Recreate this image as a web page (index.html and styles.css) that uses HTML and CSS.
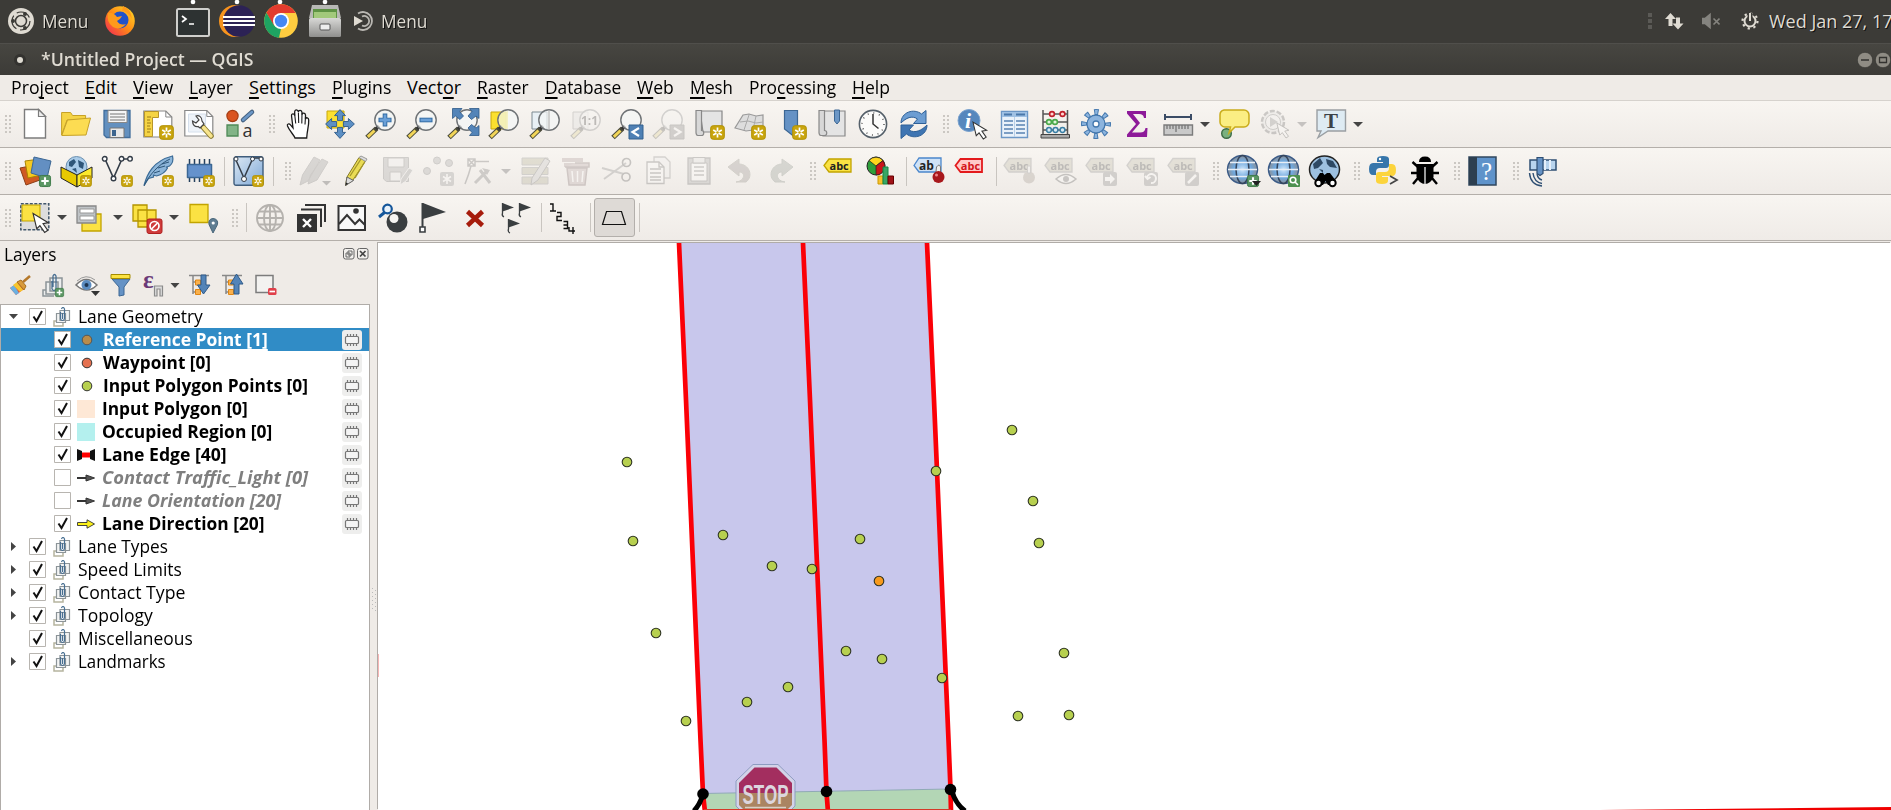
FILE: index.html
```html
<!DOCTYPE html>
<html lang="en">
<head>
<meta charset="utf-8">
<title>*Untitled Project — QGIS</title>
<link rel="stylesheet" href="styles.css">
</head>
<body>
<svg class="defs" width="0" height="0">
<defs>
<linearGradient id="gBlue" x2="1" y2="1"><stop offset="0" stop-color="#dce8f4"/><stop offset="1" stop-color="#7ea8d6"/></linearGradient>
<radialGradient id="gGlobe"><stop offset="0" stop-color="#cfe6fb"/><stop offset=".6" stop-color="#6fa8de"/><stop offset="1" stop-color="#8b9199"/></radialGradient>
<linearGradient id="gFox" x1="1" x2="0" y2="1"><stop offset="0" stop-color="#ffe226"/><stop offset=".5" stop-color="#ff8a16"/><stop offset="1" stop-color="#f0205a"/></linearGradient>
<linearGradient id="gGray" x2="0" y2="1"><stop offset="0" stop-color="#d8d8d6"/><stop offset="1" stop-color="#8f8f8d"/></linearGradient>

<symbol id="badge" viewBox="0 0 15 15"><rect x=".7" y=".7" width="13.6" height="13.6" rx="2.5" fill="#c9a50e" stroke="#b08f00"/><path d="M7.500 2.500v10M3.200 5l8.600 5M3.200 10l8.600-5" stroke="#fff" stroke-width="1.700"/><circle cx="7.500" cy="7.500" r="1.300" fill="#c9a50e"/></symbol>
<symbol id="plus" viewBox="0 0 13 13"><rect x=".5" y=".5" width="12" height="12" rx="2" fill="#5b9663" stroke="#3c7a46"/><path d="M6.500 2.500v8M2.500 6.500h8" stroke="#fff" stroke-width="2.300"/></symbol>
<symbol id="lens" viewBox="0 0 30 30"><path d="M10.500 19.500L1 28.500" stroke="#4a4a3a" stroke-width="5"/><path d="M8.500 21.500L1.800 27.800" stroke="#f2d558" stroke-width="3"/><path d="M13 17l-3 3" stroke="#333" stroke-width="3.500"/><circle cx="19" cy="11" r="10.200" fill="#f4f6f7" fill-opacity=".72" stroke="#6f7376" stroke-width="1.400"/></symbol>
<symbol id="cursor" viewBox="0 0 18 20"><path d="M1 1l3.500 14.500 3-3 4.500 6.500 3-2-4.500-6.300 5-1z" fill="#fff" stroke="#333" stroke-width="1.100"/></symbol>

<symbol id="new" viewBox="0 0 30 30"><path d="M4.500.5h14l7 7v21.500h-21z" fill="#fff" stroke="#7c7c7c" stroke-width="1.400"/><path d="M18.500.5v7h7z" fill="#eee" stroke="#7c7c7c" stroke-width="1.200"/></symbol>
<symbol id="open" viewBox="0 0 30 30"><path d="M.6 26V3.500h9l2 3h13V11H6z" fill="#f5d445" stroke="#c7a227"/><path d="M.8 26.500L6.500 11l23-2-4.500 17z" fill="#fcdc52" stroke="#c7a227"/></symbol>
<symbol id="save" viewBox="0 0 30 30"><path d="M2 1.500h26v27H4.500L2 26z" fill="#6390bf" stroke="#416d9b" stroke-width="1.300"/><path d="M6 1.500h19v12H6z" fill="#f5f5f5" stroke="#888"/><path d="M8 5h15M8 8h15M8 11h15" stroke="#777" stroke-width="1.200"/><path d="M8 19h14v9.500H8z" fill="#e8e8e8" stroke="#777"/><path d="M10 21h4v6h-4z" fill="#3c658f"/></symbol>
<symbol id="layout" viewBox="0 0 30 30"><path d="M.8 2h22l6 6v20h-28z" fill="#fff" stroke="#888" stroke-width="1.200"/><path d="M22.800 2v6h6" fill="none" stroke="#888"/><path d="M1.500 2.500h14v6h-6v19h-8z" fill="#f5d445" stroke="#b8962a"/><path d="M4 8h4M4 11h3M4 14h4M4 17h3M4 20h4M4 23h3" stroke="#9c7d19"/><use href="#badge" x="16" y="16" width="15" height="15"/></symbol>
<symbol id="layoutmgr" viewBox="0 0 30 30"><path d="M.8 1.500h22l6 6v19.500h-28z" fill="#fff" stroke="#888" stroke-width="1.200"/><path d="M4.500 5h17v18h-17z" fill="#eef3f9" stroke="#d6e0ec"/><path d="M22.800 1.500v6h6" fill="none" stroke="#888"/><path d="M18.500 17.500l8.500 9.500" stroke="#8b7c34" stroke-width="5.500" stroke-linecap="round"/><path d="M19.500 18.500l7.500 8.500" stroke="#f7e48c" stroke-width="3.500" stroke-linecap="round"/><path d="M16 19l4-4-2-3c0-4-3-6-6-5l3 4-3 3-3.500-2c0 4 2.500 6 5.500 5.500z" fill="#fff" stroke="#444" stroke-width="1.200"/></symbol>
<symbol id="style" viewBox="0 0 30 30"><circle cx="7.500" cy="7" r="5.600" fill="#da5420" stroke="#a53c12" stroke-width="1.200"/><path d="M18 11l9-8" stroke="#44607f" stroke-width="4.500" stroke-linecap="round"/><path d="M18 11l9-8" stroke="#6c97c6" stroke-width="2.500" stroke-linecap="round"/><path d="M2 16h11v11h-11z" fill="#82b487" stroke="#4f8a58" stroke-width="1.300"/><text x="17.500" y="27.500" class="g18">a</text></symbol>
<symbol id="hand" viewBox="0 0 30 30"><path d="M11 29c-1-3-5.500-7-7.500-12-.7-2 1.500-3 3-1.200l2.500 3-1.500-12c-.2-2.500 2.700-2.700 3.200-.3V3c0-2.800 3.300-2.800 3.700 0 .3-2.500 3.400-2.200 3.600.5v2c.6-2.200 3.300-1.800 3.500.5v4c.6-2 3.200-1.500 3.200 1 .3 6-1.500 9-2 18z" fill="#fff" stroke="#1a1a1a" stroke-width="1.300"/><path d="M10.700 5.500l1 9M14.400 3.500l.3 10.500M18 4.500l-.2 10M21.500 7.500l-.5 8" fill="none" stroke="#1a1a1a" stroke-width="1.100"/></symbol>
<symbol id="panto" viewBox="0 0 30 30"><path d="M2 2h17v17H2z" fill="#fbe02f" stroke="#c9a80c"/><g fill="#5c8fc4" stroke="#2e5a89" stroke-width=".9"><path d="M15 .6l5.500 6h-3v5h-5v-5h-3z"/><path d="M15 29.400l5.500-6h-3v-5h-5v5h-3z"/><path d="M.6 15l6-5.500v3h5v5h-5v3z"/><path d="M29.400 15l-6-5.500v3h-5v5h5v3z"/></g></symbol>
<symbol id="zin" viewBox="0 0 30 30"><use href="#lens"/><path d="M19 4.500v13M12.500 11h13" stroke="#2f68a0" stroke-width="4.600"/><path d="M19 5.500v11M13.500 11h11" stroke="#6aa0d8" stroke-width="2.800"/></symbol>
<symbol id="zout" viewBox="0 0 30 30"><use href="#lens"/><path d="M12.500 11h13" stroke="#2f68a0" stroke-width="4.600"/><path d="M13.500 11h11" stroke="#6aa0d8" stroke-width="2.800"/></symbol>
<symbol id="zfull" viewBox="0 0 30 30"><use href="#lens"/><g fill="#5384b8" stroke="#2e5a89" stroke-width=".8"><path d="M4.500-.5H14l-2.500 3 4 4.500-3.500 3.500L7.500 7l-3 2.500z"/><path d="M31-.5h-9.500l2.500 3-4 4.500 3.500 3.500L28 7l3 2.500z"/><path d="M31 26.500h-9.500l2.500-3-4-4.500 3.500-3.500L28 19l3-2.500z"/></g></symbol>
<symbol id="zsel" viewBox="0 0 30 30"><path d="M2 3h15v17H2z" fill="#fbe02f" stroke="#c9a80c"/><use href="#lens"/><path d="M19 2a9 9 0 0 0 0 18z" fill="#f3efb0" opacity=".7"/></symbol>
<symbol id="zlayer" viewBox="0 0 30 30"><path d="M2 3h15v17H2z" fill="#e8f0f5" stroke="#7d8a92"/><use href="#lens"/><path d="M19 2v18" stroke="#aaa"/></symbol>
<symbol id="znat" viewBox="0 0 30 30"><path d="M2 3h15v17H2z" fill="#ddd" stroke="#777"/><use href="#lens"/><text x="10" y="16" class="g12b" fill="#222">1:1</text></symbol>
<symbol id="zlast" viewBox="0 0 30 30"><use href="#lens"/><path d="M17 16h14v14H17z" fill="#4e80b4" stroke="#33608f"/><path d="M27 19l-6.500 4 6.500 4" fill="none" stroke="#fff" stroke-width="2.200"/></symbol>
<symbol id="znext" viewBox="0 0 30 30"><use href="#lens"/><path d="M17 16h14v14H17z" fill="#777" stroke="#555"/><path d="M21 19l6.500 4-6.500 4" fill="none" stroke="#fff" stroke-width="2.200"/></symbol>
<symbol id="newmap" viewBox="0 0 30 30"><path d="M6 2h22v21H9z" fill="#e4e4e4" stroke="#888" stroke-width="1.200"/><path d="M2 1.500h5.500v20c3 0 3 5 0 5H4c-2 0-2-3-2-3z" fill="#d8d8d8" stroke="#888" stroke-width="1.200"/><use href="#badge" x="16" y="16" width="15" height="15"/></symbol>
<symbol id="new3d" viewBox="0 0 30 30"><path d="M8 6l6-1 7 2 7-1v16l-10-1-7 1-11-3z" fill="#ddd" stroke="#999" stroke-width="1.200"/><path d="M5 13l8-1 8 2 7-1M14 6l-5 15M21 7l-3 14" fill="none" stroke="#aaa"/><use href="#badge" x="16" y="16" width="15" height="15"/></symbol>
<symbol id="newbm" viewBox="0 0 30 30"><path d="M8.500 1.500h13v18l-4 7.500-9-7z" fill="#6592c5" stroke="#3c6794" stroke-width="1.200"/><use href="#badge" x="16" y="16" width="15" height="15"/></symbol>
<symbol id="bm" viewBox="0 0 30 30"><path d="M6 2h22v25H6z" fill="#e4e4e4" stroke="#888" stroke-width="1.200"/><path d="M2 1.500h5.500v20c3 0 3 5 0 5H4c-2 0-2-3-2-3z" fill="#d8d8d8" stroke="#888" stroke-width="1.200"/><path d="M17.500 1h5v11l-2.500 3-2.500-3z" fill="#6c97c6" stroke="#3c6794"/></symbol>
<symbol id="clock" viewBox="0 0 30 30"><circle cx="15" cy="15" r="13.600" fill="#fbfbfa" stroke="#55606a" stroke-width="1.600"/><circle cx="15" cy="15" r="11" fill="none" stroke="#555" stroke-width="1.500" stroke-dasharray="1 4.760"/><path d="M15 5v10l5.500 4.500" fill="none" stroke="#333" stroke-width="1.500"/></symbol>
<symbol id="refresh" viewBox="0 0 30 30"><path d="M2 14C2 3 15-1 22.500 5L27 1.500v13H14.500l4-4.500C13 6 7 9 2 14z" fill="#6c9dd2" stroke="#2e6097"/><path d="M28 16c0 11-13 15-20.500 9L2 29.500V16h12.500l-4.500 5C16 25 23 21 28 16z" fill="#3f75b2" stroke="#2e6097"/></symbol>
<symbol id="info" viewBox="0 0 30 30"><circle cx="11" cy="11.500" r="11" fill="#5687bd" stroke="#7da4cf"/><text x="7" y="19" class="ital" fill="#fff">i</text><use href="#cursor" x="14" y="12" width="17" height="19"/></symbol>
<symbol id="table" viewBox="0 0 30 30"><path d="M2.500 2.500h26v26h-26z" fill="#eaf2fa" stroke="#6c97c6" stroke-width="1.400"/><path d="M3 3h25v5H3z" fill="#9fc1e4"/><path d="M5 5.500h8M17 5.500h9" stroke="#4a78aa" stroke-width="2"/><path d="M5 12h9M17 12h9M5 16h9M17 16h9M5 20h9M17 20h9M5 24h9M17 24h9" stroke="#5883b3" stroke-width="1.300"/><path d="M15.500 8v20" stroke="#b9d0e8"/></symbol>
<symbol id="abacus" viewBox="0 0 30 30"><path d="M3 1v26M27.500 1v26M3 5h24M3 13h24M3 21h24" stroke="#555" stroke-width="1.500"/><path d="M1 25.500h28.500v3.500H1z" fill="#aaa" stroke="#444"/><g fill="#ffd6d2" stroke="#c0202a" stroke-width="1.600"><circle cx="12" cy="5" r="2.400"/><circle cx="22.500" cy="5" r="2.400"/></g><g fill="#dff5da" stroke="#4aa84a" stroke-width="1.600"><circle cx="9" cy="13" r="2.400"/><circle cx="15" cy="13" r="2.400"/></g><g fill="#d7eaf5" stroke="#3b7fa5" stroke-width="1.500"><circle cx="9" cy="21" r="2.400"/><circle cx="15.500" cy="21" r="2.400"/><circle cx="22.500" cy="21" r="2.400"/></g></symbol>
<symbol id="gear" viewBox="0 0 30 30"><circle cx="15" cy="15" r="12" fill="none" stroke="#4478ae" stroke-width="6" stroke-dasharray="4.400 5.025" stroke-dashoffset="2.200"/><circle cx="15" cy="15" r="12" fill="none" stroke="#8cb4de" stroke-width="4" stroke-dasharray="2.500 6.925" stroke-dashoffset="1.250"/><circle cx="15" cy="15" r="9" fill="#8cb4de" stroke="#4478ae" stroke-width="1.300"/><circle cx="15" cy="15" r="3" fill="#fff" stroke="#4478ae" stroke-width="1.300"/></symbol>
<symbol id="sigma" viewBox="0 0 30 30"><path d="M5 2h19v7h-2c-.5-3-2-4-5-4h-6l7 9-8 9.500h8c3.500 0 5-1.500 5.500-4.500h2L25 28H5v-2.500L14 15 5 4.500z" fill="#8d1a99"/></symbol>
<symbol id="measure" viewBox="0 0 30 30"><path d="M2 8h26M2 5v6M28 5v6" stroke="#3b4c66" stroke-width="2"/><path d="M1 16h28.500v10H1z" fill="#c9c9c9" stroke="#7c7c7c" stroke-width="1.400"/><path d="M4 16v4M7 16v4M10 16v4M13 16v7M16 16v4M19 16v4M22 16v4M25 16v4" stroke="#777" stroke-width="1.300"/></symbol>
<symbol id="tip" viewBox="0 0 30 30"><circle cx="7.500" cy="24.500" r="4.800" fill="#79b07f" stroke="#3d6b45" stroke-width="1.400"/><path d="M5 1h20a5 5 0 0 1 5 5v7a5 5 0 0 1-5 5h-9l-6 6 1.500-6H6a5 5 0 0 1-5-5V6a5 5 0 0 1 4-5z" fill="#fbee83" stroke="#c9ac1b" stroke-width="1.500"/></symbol>
<symbol id="action" viewBox="0 0 30 30"><circle cx="13" cy="13" r="11" fill="#ddd" stroke="#555" stroke-width="2.500" stroke-dasharray="5 1.900"/><circle cx="13" cy="13" r="7.500" fill="#eee" stroke="#666"/><path d="M10 8l8 5-8 5z" fill="#777"/><use href="#cursor" x="16" y="13" width="15" height="17"/></symbol>
<symbol id="textann" viewBox="0 0 30 30"><path d="M1 1h28.500v21H12L2 28.500l3-6.500H1z" fill="#deebf3" stroke="#9a9fa3" stroke-width="1.400"/><text x="8" y="18.500" class="serifT">T</text></symbol>

<symbol id="dsm" viewBox="0 0 30 30"><path d="M0 12l15-3 5 15-14 5z" fill="#cf5a24" stroke="#8d3d16"/><path d="M5 5l15-2 2 16-14 3z" fill="#f5c921" stroke="#a98400"/><path d="M14 1l17 4-4 17-16-5z" fill="#638fc2" stroke="#3c6794"/><use href="#plus" x="19" y="19" width="12" height="12"/></symbol>
<symbol id="geopkg" viewBox="0 0 30 30"><circle cx="15.500" cy="11" r="10.500" fill="#a9cbe8" stroke="#6b90b0"/><path d="M8 6l5-3 2 3-4 5-3-1zM17 4l6 3-1 6-4-2zM11 13l4-1 1 5z" fill="#2f5678"/><path d="M0 11l16 8v12L0 22z" fill="#e8c900" stroke="#222"/><path d="M16 19l15-8v11l-15 9z" fill="#fbe82b" stroke="#222"/><use href="#badge" x="19" y="19" width="12" height="12"/></symbol>
<symbol id="shp" viewBox="0 0 30 30"><path d="M3 3l8.500 19L20 3h7" fill="none" stroke="#333c47" stroke-width="1.600"/><g fill="#fff" stroke="#333c47" stroke-width="1.400"><circle cx="2.700" cy="2.800" r="2.300"/><circle cx="11.500" cy="22.500" r="2.300"/><circle cx="19.500" cy="2.800" r="2.300"/><circle cx="28" cy="2.800" r="2.300"/></g><use href="#badge" x="19" y="19" width="12" height="12"/></symbol>
<symbol id="feather" viewBox="0 0 30 30"><path d="M1 29.500C4 18 10 5 29.500 0c1 4-.5 8-3 10l-3 1 1 1c-2 4-7 7-11 8l-3-1 0 2-5 1.500z" fill="#8db6da" stroke="#3c6c97" stroke-width="1.200"/><path d="M1 30C6 19 16 8 27 3M11 17l6-2M15 12l7-2M19 8l7-2" fill="none" stroke="#2d5679"/><use href="#badge" x="19" y="19" width="12" height="12"/></symbol>
<symbol id="chip" viewBox="0 0 30 30"><path d="M5.500 3v23M10.500 3v23M15.500 3v23M20.500 3v23M25.500 3v23" stroke="#26415e" stroke-width="1.500"/><path d="M3.500 8.500h24v13h-24z" fill="#6592cc" stroke="#3c6794" stroke-width="1.500" stroke-linejoin="round"/><use href="#badge" x="19" y="19" width="12" height="12"/></symbol>
<symbol id="virt" viewBox="0 0 30 30"><rect x="1" y=".8" width="29" height="28.500" rx="2" fill="url(#gBlue)" stroke="#3f5d7c" stroke-width="1.400"/><path d="M2 2l9 20L20 2h9" fill="none" stroke="#333c47" stroke-width="1.500"/><g fill="#fff" stroke="#333c47"><circle cx="3" cy="3" r="2"/><circle cx="11" cy="23" r="2.500"/><circle cx="19.500" cy="3" r="2"/><circle cx="28" cy="3" r="2"/></g><use href="#badge" x="19" y="19" width="12" height="12"/></symbol>
<symbol id="edits" viewBox="0 0 30 30"><path d="M0 29l2.500-10L14 1l6 3L8 25zM8 28l2.500-9L22 3l6 3-11 18z" fill="#888" stroke="#666"/><path d="M22 25h9l-4.500 4.500z" fill="#333"/></symbol>
<symbol id="pencil" viewBox="0 0 30 30"><path d="M4.500 29.500L6 21 18 1.500l6.500 3.500L12 24z" fill="#eadc55" stroke="#857822"/><path d="M14 22L24 5.500M9 20L20 3" stroke="#a5972b" stroke-width="1.300"/><path d="M18 1.500L20 0l6 3-1.500 2.500z" fill="#ddd" stroke="#999"/><path d="M4.500 29.500L6 21l6.500 3.500z" fill="#ddd" stroke="#666"/><path d="M4.500 29.500l.6-3 2 1z" fill="#222"/></symbol>
<symbol id="savee" viewBox="0 0 30 30"><path d="M1.500 1.500h25v24h-22l-3-2.500z" fill="#999" stroke="#666"/><path d="M6 2h16v9H6zM8 16h11v9H8z" fill="#eee" stroke="#666"/><path d="M18 29l1-6 8-11 4 2-7 11z" fill="#888" stroke="#eee"/></symbol>
<symbol id="addpt" viewBox="0 0 30 30"><g fill="#999" stroke="#666"><circle cx="14" cy="4.500" r="3.500"/><circle cx="26" cy="7" r="3.500"/><circle cx="4" cy="15" r="3.500"/></g><rect x="17" y="16" width="14" height="14" rx="2" fill="#888"/><path d="M24 18v10M20 20.500l8 5M20 25.500l8-5" stroke="#fff" stroke-width="1.600"/></symbol>
<symbol id="vertex" viewBox="0 0 30 30"><path d="M4 3h7v7H4zM4 3l7 7M11 3l-7 7M11 5.500h14M7 10Q5 18 1 28" fill="none" stroke="#555" stroke-width="1.500"/><path d="M11 27l13-13M16 14l10 13" stroke="#666" stroke-width="3"/><path d="M18 12l8 2-3 5z" fill="#666"/></symbol>
<symbol id="modattr" viewBox="0 0 30 30"><path d="M2 2h26v7H2zM2 11.500h26v7H2zM2 21h26v7H2z" fill="#a9a46f" stroke="#777"/><path d="M11 29l1-7L25 2l5 3-12 19z" fill="#bbb" stroke="#555"/></symbol>
<symbol id="trash" viewBox="0 0 30 30"><path d="M1 2h21v4H1zM3 7h18v4H3z" fill="#a88"/><path d="M6 12h20l-2 17H8zM4 11h24V7H14" fill="#b99" stroke="#755" stroke-width="1.500"/><path d="M11 15l1 11M16.500 15v11M22 15l-1 11" stroke="#fff" stroke-width="1.500"/></symbol>
<symbol id="cut" viewBox="0 0 30 30"><path d="M0 12l22 6M2 23L24 7" stroke="#777" stroke-width="2"/><circle cx="24.500" cy="6.500" r="4" fill="none" stroke="#444" stroke-width="1.700"/><circle cx="24" cy="21" r="4" fill="none" stroke="#444" stroke-width="1.700"/></symbol>
<symbol id="copy" viewBox="0 0 30 30"><path d="M11 1h11l5 5v16H11z" fill="#eee" stroke="#777" stroke-width="1.300"/><path d="M4 6h12l5 5v16.500H4z" fill="#fff" stroke="#555" stroke-width="1.300"/><path d="M7 13h11M7 17h11M7 21h11M7 24h11M16 6v5h5" fill="none" stroke="#555" stroke-width="1.300"/></symbol>
<symbol id="paste" viewBox="0 0 30 30"><path d="M4 2h22v26H4z" fill="#999" stroke="#555" stroke-width="1.300"/><path d="M7 7h16v18H7z" fill="#fff" stroke="#555"/><path d="M9 1.500h12V7H9z" fill="#ddd" stroke="#555"/><path d="M10 11h10M10 15h10M10 19h10" stroke="#666" stroke-width="1.300"/></symbol>
<symbol id="undo" viewBox="0 0 30 30"><path d="M3 11L14 3v5c10 0 15 12 7 18H11c9-1 10-10 3-10v4z" fill="#8a7c78" stroke="#776"/></symbol>
<symbol id="redo" viewBox="0 0 30 30"><path d="M27 11L16 3v5C6 8 1 20 9 26h10c-9-1-10-10-3-10v4z" fill="#7c8a7c" stroke="#676"/></symbol>
<symbol id="abc" viewBox="0 0 30 30"><path d="M-1 9.500L4 3h22v13H4z" fill="#fae243" stroke="#c2a400" stroke-width="1.300"/><text x="4.500" y="13.500" class="g11b" fill="#222">abc</text></symbol>
<symbol id="diagram" viewBox="0 0 30 30"><circle cx="10" cy="10" r="9" fill="#2f9e3a" stroke="#222"/><path d="M10 10L3 4.500A9 9 0 0 1 17 4.500z" fill="#ffd51c" stroke="#222" stroke-width=".7"/><path d="M10 10l7-5.500A9 9 0 0 1 10 19z" fill="#c8141b" stroke="#222" stroke-width=".7"/><path d="M12 20h5v8h-5z" fill="#f8c22d" stroke="#c90"/><path d="M17 11h5v17h-5z" fill="#3aa565" stroke="#184"/><path d="M22 20h5.500v8H22z" fill="#a01218" stroke="#600"/></symbol>
<symbol id="abpin" viewBox="0 0 30 30"><path d="M-1 9.500L4 2h22v14H4z" fill="#cfe2f7" stroke="#4b87cc" stroke-width="1.300"/><text x="4" y="13.500" class="g12b" fill="#222">ab</text><path d="M20.500 20l1-9q3-4 4 0v9" fill="#eee" stroke="#777"/><circle cx="23.500" cy="21" r="6" fill="#a8181c"/><circle cx="21.500" cy="19" r="1.500" fill="#e88"/></symbol>
<symbol id="abcred" viewBox="0 0 30 30"><path d="M-.5 9.500L4.500 3H26v13H4.500z" fill="#ffc9c9" stroke="#e31a1c" stroke-width="1.800"/><text x="4.800" y="13.500" class="g11b" fill="#d4151b">abc</text></symbol>
<symbol id="tagg" viewBox="0 0 30 30"><path d="M-1 9.500L4 2.500h22v13.500H4z" fill="#b5ae8a" stroke="#777" stroke-width="1.300"/><text x="4.500" y="13.500" class="g11b" fill="#222">abc</text></symbol>
<symbol id="l1" viewBox="0 0 30 30"><use href="#tagg"/><circle cx="24" cy="21.500" r="6" fill="#987" /><path d="M22.500 17V10h3v7z" fill="#eee" stroke="#777"/></symbol>
<symbol id="l2" viewBox="0 0 30 30"><use href="#tagg"/><path d="M10 23q10-9 20 0-10 9-20 0z" fill="#fff" stroke="#444" stroke-width="1.500"/><circle cx="20" cy="23" r="3" fill="#555"/></symbol>
<symbol id="l3" viewBox="0 0 30 30"><use href="#tagg"/><rect x="16" y="16" width="14" height="14" rx="2" fill="#777"/><path d="M18 21h5v-3l5 5-5 5v-3h-5z" fill="#fff"/></symbol>
<symbol id="l4" viewBox="0 0 30 30"><use href="#tagg"/><rect x="16" y="16" width="14" height="14" rx="2" fill="#777"/><path d="M19 22a4.500 4.500 0 1 1 4 5M17 20l2.500 3 3-2" fill="none" stroke="#fff" stroke-width="2"/></symbol>
<symbol id="l5" viewBox="0 0 30 30"><use href="#tagg"/><rect x="16" y="16" width="14" height="14" rx="2" fill="#777"/><path d="M19 27l8-8" stroke="#fff" stroke-width="2.500"/></symbol>
<symbol id="globe" viewBox="0 0 30 30"><ellipse cx="14.500" cy="13.500" rx="15" ry="14" fill="url(#gGlobe)" stroke="#3c5c88" stroke-width="1.500"/><ellipse cx="14.500" cy="13.500" rx="6.500" ry="14" fill="none" stroke="#35455c" stroke-width="1.500"/><path d="M2 6.500h25M0 13.500h29M2 20.500h25" stroke="#e8eef6" stroke-width="1.500"/></symbol>
<symbol id="gadd" viewBox="0 0 30 30"><use href="#globe"/><use href="#plus" x="19" y="19" width="12" height="12"/><path d="M24 25h9l-4.500 5z" fill="#222"/></symbol>
<symbol id="gsearch" viewBox="0 0 30 30"><use href="#globe"/><rect x="19" y="19" width="12" height="12" rx="1" fill="#4d9150"/><circle cx="24" cy="24" r="2.800" fill="none" stroke="#fff" stroke-width="1.600"/><path d="M26 26l3 3" stroke="#fff" stroke-width="1.600"/></symbol>
<symbol id="gbino" viewBox="0 0 30 30"><ellipse cx="14.500" cy="13.500" rx="15" ry="13.500" fill="#9dc0e0" stroke="#222" stroke-width="1.500"/><path d="M3 8l7-6 3 5-5 5-4 1zM16 3l7 2 4 7-7-1-3-3zM9 13l4 1v3" fill="#2e4964"/><path d="M5 25l5-8h3l1.500 2L17 17h3l6 8-3 4h-5l-2.500-4L13 29H8z" fill="#000"/><circle cx="8.500" cy="27" r="3.200" fill="#fff" stroke="#000" stroke-width="2"/><circle cx="22.500" cy="27" r="3.200" fill="#fff" stroke="#000" stroke-width="2"/></symbol>
<symbol id="python" viewBox="0 0 30 30"><path d="M8 3q0-3 6-3t6 3v6q0 3-3 3h-6q-4 0-4 4v3H4q-4 0-4-6t4-6h10V6H8z" fill="#3776ab"/><path d="M20 8h3q4 0 4 6t-4 6H13v1h6v4q0 3-6 3t-6-3v-6q0-3 3-3h6q4 0 4-4z" fill="#fcd43c"/><circle cx="11" cy="3" r="1.200" fill="#fff"/><path d="M21 20l7 4-7 4" fill="none" stroke="#444" stroke-width="1.700"/></symbol>
<symbol id="bug" viewBox="0 0 30 30"><path d="M9 6q0-5.500 6-5.500T21 6z"/><path d="M6.500 8h17v13q-3 7-8.500 7T6.500 21z"/><path d="M15 11v17" stroke="#eee" stroke-width="1.300"/><path d="M8 11L2.500 6M22 11l5.500-5M7 17H1M23 17h6M8 22l-5 6M22 22l5 6" stroke="#000" stroke-width="2.400" fill="none"/></symbol>
<symbol id="help" viewBox="0 0 30 30"><path d="M0 1h27v28H0z" fill="#5f93ca" stroke="#30475e" stroke-width="1.500"/><path d="M0 1h8v28H0z" fill="#2d3f50"/><text x="12" y="23.500" class="serifQ">?</text></symbol>
<symbol id="sat" viewBox="0 0 30 30"><path d="M2 4h9v10H2zM13 4h15v10H13z" fill="#b8d4ee" stroke="#2f4f73" stroke-width="1.500"/><path d="M17 4v10M22 4v10" stroke="#e5effa" stroke-width="2"/><path d="M9 1.500h6v16l-3 2-3-2z" fill="#6592c5" stroke="#2f4f73" stroke-width="1.200"/><path d="M9 18q1 5 5 6M5 17q1 9 9 10.500M1.500 17q1 12 12.500 13" fill="none" stroke="#2f4f73" stroke-width="1.400"/></symbol>

<symbol id="sel" viewBox="0 0 30 30"><path d="M.8.800h28v26H.8z" fill="#ddd" stroke="#41566b" stroke-width="1.500" stroke-dasharray="3 1.500"/><path d="M2 2h18v16H2z" fill="#fbe243" stroke="#c2a400"/><use href="#cursor" x="12" y="9.500" width="19" height="21"/></symbol>
<symbol id="selform" viewBox="0 0 30 30"><path d="M6 11h19v17H6z" fill="#fbe243" stroke="#c2a400" stroke-width="1.300"/><path d="M1 3h19v17H1z" fill="#bfc3c6" stroke="#888" stroke-width="1.300"/><path d="M4 6h14v4H4zM4 13h14v4H4z" fill="#fff" stroke="#999"/></symbol>
<symbol id="desel" viewBox="0 0 30 30"><path d="M1 2h14v16H1zM6 7h18v17H6z" fill="#fbe243" stroke="#b39400" stroke-width="1.300"/><rect x="15" y="16" width="15" height="14.500" rx="2" fill="#cf3b3b" stroke="#b02020"/><circle cx="22.500" cy="23" r="4.500" fill="none" stroke="#fff" stroke-width="1.700"/><path d="M19.500 26l6-6" stroke="#fff" stroke-width="1.700"/></symbol>
<symbol id="selloc" viewBox="0 0 30 30"><path d="M2 1.500h18v18H2z" fill="#fbe243" stroke="#c2a400" stroke-width="1.300"/><path d="M25 30l-4-8.500q-1-5.500 4-6 5.500.5 4.500 6z" fill="#5f7d92" stroke="#48657a"/><circle cx="25.200" cy="20" r="1.600" fill="#fff"/></symbol>
<symbol id="wire" viewBox="0 0 30 30"><g fill="none" stroke="#b5b2ae" stroke-width="1.900"><circle cx="15" cy="15" r="13"/><ellipse cx="15" cy="15" rx="6" ry="13"/><path d="M2 15h26M4 8.500h22M4 21.500h22M15 2v26"/></g></symbol>
<symbol id="xlay" viewBox="0 0 30 30"><path d="M9 2h20v17M5 6.500h20V24" fill="none" stroke="#333" stroke-width="2"/><path d="M1 11h20v18H1z" fill="#333"/><path d="M7 16l8 8M15 16l-8 8" stroke="#fff" stroke-width="2.400"/></symbol>
<symbol id="pic" viewBox="0 0 30 30"><path d="M1.500 3h26.500v24H1.500z" fill="#f8f8f8" stroke="#333" stroke-width="2"/><circle cx="19" cy="8" r="2.800" fill="#333"/><path d="M2 21l8-9 8 9 4.500-4.500L28 22" fill="none" stroke="#333" stroke-width="2"/></symbol>
<symbol id="ball" viewBox="0 0 30 30"><circle cx="19" cy="19" r="10.500" fill="#3a3e40"/><circle cx="16" cy="15.500" r="4.500" fill="#f6f4f1"/><circle cx="9.500" cy="6" r="4.300" fill="#e8f2fb" stroke="#15569a" stroke-width="2.200"/><path d="M6.500 9.500L1 14" stroke="#15569a" stroke-width="3"/></symbol>
<symbol id="flag" viewBox="0 0 30 30"><path d="M3.500 0v24" stroke="#3a3e40" stroke-width="2"/><path d="M4 0l23 9-23 7z" fill="#3a3e40"/><path d="M1 24h5v5H1z" fill="#fff" stroke="#3a3e40" stroke-width="1.600"/></symbol>
<symbol id="xred" viewBox="0 0 30 30"><path d="M7.500 8.500l15 14M22.500 8.500l-15 14" stroke="#a61c0c" stroke-width="4.500"/></symbol>
<symbol id="flags" viewBox="0 0 30 30"><g id="f3"><path d="M1.500 0v10q-1 3 1.500 4" fill="none" stroke="#3a3e40" stroke-width="1.300"/><path d="M1.500 0l11.500 4.500-11.500 4z" fill="#3a3e40"/></g><use href="#f3" x="17"/><use href="#f3" x="6" y="16"/></symbol>
<symbol id="n1234" viewBox="0 0 30 30"><path d="M0 1h3v7M0 8h6M7 9.500h4v4H7v4h5M13.500 18.500h4v7h-4M13.500 22h4M19 24v4h6M23 24v7" fill="none" stroke="#111" stroke-width="1.400"/></symbol>
<symbol id="trap" viewBox="0 0 30 30"><path d="M7.500 8.500h15l4 13h-23z" fill="none" stroke="#111" stroke-width="1.200"/></symbol>

<symbol id="grp" viewBox="0 0 18 20"><path d="M4 14H1v5h9v-3" fill="none" stroke="#b5b49f" stroke-width="1.500"/><path d="M3.500 6.500h9v9h-9zM7 3.500h9.500v10H7z" fill="#eef0f0" fill-opacity=".7" stroke="#8c9498" stroke-width="1.200"/><path d="M7.500 5v7q2 3 4 0V2Q10-1 8.500 2M9.500 6v6" fill="none" stroke="#486f92" stroke-width="1.200"/></symbol>
<symbol id="mem" viewBox="0 0 20 20"><rect width="20" height="20" rx="3" fill="#eeeeed"/><path d="M5.500 4v12M8.500 4v12M11.500 4v12M14.500 4v12" stroke="#777" stroke-width="1.200"/><rect x="3.500" y="6.500" width="13" height="7" rx="1" fill="#f4f4f4" stroke="#777" stroke-width="1.200"/></symbol>
<symbol id="check" viewBox="0 0 17 17"><path d="M.5.5h16v16H.5z" fill="#fff" stroke="#b8b5b0"/><path d="M4.500 8.500l3 4.500 5.500-10" fill="none" stroke="#111" stroke-width="2"/></symbol>
<symbol id="uncheck" viewBox="0 0 17 17"><path d="M.5.5h16v16H.5z" fill="#fff" stroke="#b8b5b0"/></symbol>
<symbol id="down" viewBox="0 0 9 5"><path d="M0 0h9L4.500 5z" fill="#444"/></symbol>
<symbol id="right" viewBox="0 0 5 9"><path d="M0 0v9l5-4.500z" fill="#444"/></symbol>
<symbol id="arrow" viewBox="0 0 18 8"><path d="M0 4h10" stroke="#333" stroke-width="2"/><path d="M9 1l8.500 3L9 7z" fill="#555" stroke="#333"/></symbol>
<symbol id="yarrow" viewBox="0 0 18 10"><path d="M.5 3.500H10V.8L17.500 5 10 9.200V6.500H.5z" fill="#fbf018" stroke="#333" stroke-width=".9"/></symbol>
<symbol id="edge" viewBox="0 0 18 12"><path d="M0 0l5 2v8l-5 2zM18 0l-5 2v8l5 2z" fill="#111"/><path d="M5 3.500h8v5H5z" fill="#f00"/></symbol>
</defs>
</svg>

<header class="panel">
  <svg class="p-logo" width="26" height="43"><circle cx="13" cy="21" r="13" fill="#dfdbd2"/><circle cx="13" cy="21" r="5.500" fill="none" stroke="#3c3b37" stroke-width="1.500"/><circle cx="13" cy="21" r="9" fill="none" stroke="#3c3b37" stroke-width="1.200" stroke-dasharray="15 3.850"/><g fill="#3c3b37"><circle cx="5" cy="21" r="2"/><circle cx="17" cy="14" r="2"/><circle cx="17" cy="28" r="2"/></g></svg>
  <span class="ptext m8" data-w="46">Menu</span>
  <svg class="m17" width="30" height="43"><circle cx="15" cy="21" r="14.800" fill="url(#gFox)"/><circle cx="15" cy="20" r="8.500" fill="#2152c8"/><path d="M3 13q5-1 9 4l5-1q-2 4-5 5 3 5 9 3-6 7-13 3-7-5-5-14zM18 6q8 3 9 13-5-8-10-8z" fill="#ff9a1b"/></svg>
  <svg class="m41" width="34" height="43"><circle cx="17" cy="2" r="2.300" fill="#fff"/><rect x="1" y="9" width="32" height="27" rx="1.500" fill="#2d3232" stroke="#cfcfcc" stroke-width="2"/><path d="M6 16l4 3-4 3M13 24h5" fill="none" stroke="#fff" stroke-width="1.700"/></svg>
  <svg class="m9" width="36" height="43"><circle cx="18" cy="2" r="2.300" fill="#fff"/><circle cx="16" cy="21" r="16" fill="#f7941e"/><circle cx="20" cy="21" r="15.800" fill="#2c2255"/><path d="M4 17h32M4 21h32M4 25h32" stroke="#fff" stroke-width="2"/></svg>
  <svg class="m9" width="34" height="43"><circle cx="16" cy="2" r="2.300" fill="#fff"/><circle cx="17" cy="21" r="16.800" fill="#ffcd40"/><path d="M2.400 12.700A16.800 16.800 0 0 1 31.600 13H17l-7.500 12.500z" fill="#e33b2e"/><path d="M2.400 12.700l7.500 12.600L17 28.500 15 37.800A16.800 16.800 0 0 1 2.400 12.700z" fill="#1ea362"/><circle cx="17" cy="21" r="8" fill="#fff"/><circle cx="17" cy="21" r="6.200" fill="#4587f3"/></svg>
  <svg class="m11" width="32" height="43"><circle cx="16" cy="2" r="2.300" fill="#fff"/><path d="M3 5h26l3 13H0z" fill="#b8b8b5"/><path d="M4 9h24v9H4z" fill="#5e9344"/><path d="M5 12h22v6H5z" fill="#a2c97b"/><rect y="18" width="32" height="19" rx="1.500" fill="url(#gGray)"/><rect x="11" y="24" width="10" height="6" rx="1" fill="#eee" stroke="#555"/></svg>
  <svg class="m13" width="20" height="43"><g fill="none" stroke="#b9b7b2" stroke-width="1.800"><path d="M4 13.500a9 9 0 1 1 0 15"/><path d="M8 16.500a5 5 0 1 1 0 9"/></g><path d="M0 16l9 5-9 5z" fill="#dfdbd2"/></svg>
  <span class="ptext m7" data-w="46">Menu</span>
  <span class="grow"></span>
  <svg width="6" height="43"><path d="M1 13h4v4H1zM1 19h4v4H1zM1 25h4v4H1z" fill="#5b5a56"/></svg>
  <svg class="m12" width="19" height="43"><path d="M5.500 13l5.500 6H7.500v7h-4v-7H0zM13 29.500l-5.500-6h3.500v-6h4v6h3.500z" fill="#dfdbd2"/></svg>
  <svg class="m18" width="18" height="43"><path d="M0 18.500h3l5-4v13l-5-4H0zM11.500 18.500l6 6M17.500 18.500l-6 6" fill="#85847f" stroke="#85847f" stroke-width="1.600"/></svg>
  <svg class="m21" width="18" height="43"><circle cx="9" cy="21" r="5.500" fill="none" stroke="#dfdbd2" stroke-width="2"/><circle cx="9" cy="21" r="7.500" fill="none" stroke="#dfdbd2" stroke-width="2.200" stroke-dasharray="2.300 3.590"/><path d="M9 13v8" stroke="#3c3b37" stroke-width="5"/><path d="M9 13v8" stroke="#dfdbd2" stroke-width="2"/></svg>
  <span class="ptext m10 clock" data-w="123">Wed Jan 27, 17</span>
</header>

<div class="title">
  <svg width="14" height="32"><circle cx="7" cy="16" r="6" fill="#33322f"/><circle cx="7" cy="16" r="3" fill="#dfdbd2"/></svg>
  <span class="ttext" data-w="212">*Untitled Project — QGIS</span>
  <span class="grow"></span>
  <svg width="34" height="32"><g fill="#8f8c84" stroke="#2c2b28" stroke-width=".6"><circle cx="8" cy="16" r="7.700"/><circle cx="26" cy="16" r="7.700"/></g><path d="M4 16h8M22.500 13.500h7v5h-7z" fill="none" stroke="#33322f" stroke-width="1.300"/></svg>
</div>

<nav class="menu">
  <span data-w="58">Pro<u>j</u>ect</span><span data-w="32"><u>E</u>dit</span><span data-w="40"><u>V</u>iew</span><span data-w="44"><u>L</u>ayer</span><span data-w="67"><u>S</u>ettings</span><span data-w="59"><u>P</u>lugins</span><span data-w="54">Vect<u>o</u>r</span><span data-w="52"><u>R</u>aster</span><span data-w="76"><u>D</u>atabase</span><span data-w="37"><u>W</u>eb</span><span data-w="43"><u>M</u>esh</span><span data-w="87">Pro<u>c</u>essing</span><span data-w="38"><u>H</u>elp</span>
</nav>

<div class="bar">
  <i class="grip first"></i>
  <b><svg><use href="#new"/></svg></b><b><svg><use href="#open"/></svg></b><b><svg><use href="#save"/></svg></b><b><svg><use href="#layout"/></svg></b><b><svg><use href="#layoutmgr"/></svg></b><b><svg><use href="#style"/></svg></b>
  <i class="grip"></i>
  <b><svg><use href="#hand"/></svg></b><b><svg><use href="#panto"/></svg></b><b><svg><use href="#zin"/></svg></b><b><svg><use href="#zout"/></svg></b><b><svg><use href="#zfull"/></svg></b><b><svg><use href="#zsel"/></svg></b><b><svg><use href="#zlayer"/></svg></b><b class="off"><svg><use href="#znat"/></svg></b><b><svg><use href="#zlast"/></svg></b><b class="off"><svg><use href="#znext"/></svg></b><b><svg><use href="#newmap"/></svg></b><b><svg><use href="#new3d"/></svg></b><b><svg><use href="#newbm"/></svg></b><b><svg><use href="#bm"/></svg></b><b><svg><use href="#clock"/></svg></b><b><svg><use href="#refresh"/></svg></b>
  <i class="grip"></i>
  <b><svg><use href="#info"/></svg></b><b><svg><use href="#table"/></svg></b><b><svg><use href="#abacus"/></svg></b><b><svg><use href="#gear"/></svg></b><b><svg><use href="#sigma"/></svg></b><b class="dd"><svg><use href="#measure"/></svg></b><b><svg><use href="#tip"/></svg></b><b class="dd off"><svg><use href="#action"/></svg></b><b class="dd"><svg><use href="#textann"/></svg></b>
</div>

<div class="bar">
  <i class="grip first"></i>
  <b><svg><use href="#dsm"/></svg></b><b><svg><use href="#geopkg"/></svg></b><b><svg><use href="#shp"/></svg></b><b><svg><use href="#feather"/></svg></b><b><svg><use href="#chip"/></svg></b>
  <i class="sep"></i><b><svg><use href="#virt"/></svg></b><i class="sep"></i><i class="grip"></i>
  <b class="off"><svg><use href="#edits"/></svg></b><b><svg><use href="#pencil"/></svg></b><b class="off"><svg><use href="#savee"/></svg></b><b class="off"><svg><use href="#addpt"/></svg></b><b class="dd off"><svg><use href="#vertex"/></svg></b><b class="off"><svg><use href="#modattr"/></svg></b><b class="off"><svg><use href="#trash"/></svg></b><b class="off"><svg><use href="#cut"/></svg></b><b class="off"><svg><use href="#copy"/></svg></b><b class="off"><svg><use href="#paste"/></svg></b><b class="off"><svg><use href="#undo"/></svg></b><b class="off"><svg><use href="#redo"/></svg></b>
  <i class="grip"></i>
  <b><svg><use href="#abc"/></svg></b><b><svg><use href="#diagram"/></svg></b><i class="sep"></i><b><svg><use href="#abpin"/></svg></b><b><svg><use href="#abcred"/></svg></b><i class="sep"></i>
  <b class="off"><svg><use href="#l1"/></svg></b><b class="off"><svg><use href="#l2"/></svg></b><b class="off"><svg><use href="#l3"/></svg></b><b class="off"><svg><use href="#l4"/></svg></b><b class="off"><svg><use href="#l5"/></svg></b>
  <i class="grip"></i>
  <b><svg><use href="#gadd"/></svg></b><b><svg><use href="#gsearch"/></svg></b><b><svg><use href="#gbino"/></svg></b><i class="grip"></i>
  <b><svg><use href="#python"/></svg></b><b><svg><use href="#bug"/></svg></b><i class="grip"></i>
  <b><svg><use href="#help"/></svg></b><i class="grip"></i><b><svg><use href="#sat"/></svg></b>
</div>

<div class="bar last">
  <i class="grip first"></i>
  <b class="dd"><svg><use href="#sel"/></svg></b><b class="dd"><svg><use href="#selform"/></svg></b><b class="dd"><svg><use href="#desel"/></svg></b><b><svg><use href="#selloc"/></svg></b>
  <i class="grip"></i><i class="sep"></i>
  <b><svg><use href="#wire"/></svg></b><b><svg><use href="#xlay"/></svg></b><b><svg><use href="#pic"/></svg></b><b><svg><use href="#ball"/></svg></b><b><svg><use href="#flag"/></svg></b><b><svg><use href="#xred"/></svg></b><b><svg><use href="#flags"/></svg></b>
  <i class="sep"></i><b><svg><use href="#n1234"/></svg></b><i class="sep"></i><b class="on"><svg><use href="#trap"/></svg></b><i class="sep"></i>
</div>

<main class="work">
  <aside class="dock">
    <div class="dhead"><span data-w="52">Layers</span><span class="grow"></span>
      <svg width="26" height="12"><g fill="#f2f0ed" stroke="#666"><rect x=".5" y=".5" width="10.500" height="10.500" rx="2"/><rect x="14.500" y=".5" width="10.500" height="10.500" rx="2"/><path d="M5 3h4v4H5zM3 5h4v4H3z"/></g><path d="M17 3l5.500 5.500M22.500 3L17 8.500" stroke="#444" stroke-width="1.700"/></svg>
    </div>
    <div class="dtools">
      <svg width="22" height="22"><path d="M1 14l9-6 5 7-8 6z" fill="#e8503a"/><path d="M1 14l4-3 5 8-3 2z" fill="#6ab0e0"/><path d="M4 11l4-3 6 8-3 2z" fill="#f7c52d"/><path d="M8 8l4-2 5 6-2 4z" fill="#d89a3c" stroke="#a86e1c"/><path d="M14 8l7-6" stroke="#b5782a" stroke-width="2.500"/></svg>
      <svg width="22" height="24"><path d="M4 17H1v6h11M4 9h12v12H4zM8 5h12v13H8z" fill="#eceeee" stroke="#8c9498" stroke-width="1.500"/><path d="M10 8v8q2 3 4 0V3q-1.500-3-3 0v11" fill="none" stroke="#486f92" stroke-width="1.300"/><use href="#plus" x="13" y="15" width="9" height="9"/></svg>
      <svg width="25" height="22"><path d="M1 11q10-11 21 0-10 10-21 0z" fill="#fff" stroke="#777" stroke-width="1.500"/><path d="M2 7Q11-1 20 6" fill="none" stroke="#999"/><circle cx="11.500" cy="11" r="5" fill="#5b8cc0"/><circle cx="11.500" cy="11" r="2" fill="#1d3550"/><path d="M16 17h9l-4.500 5z" fill="#333"/></svg>
      <svg width="20" height="24"><path d="M1 6h18l-6 8v8l-5 1v-9z" fill="#6592c5" stroke="#3c6794"/><path d="M0 1.500h19v4H0z" fill="#fbe243" stroke="#a58b00"/></svg>
      <svg width="36" height="24"><text x="1" y="15" class="eps">ε</text><path d="M12.500 23V13h8v10h-2.500v-7h-3v7z" fill="#ddd" stroke="#8b8b8b" stroke-width="1.200"/><path d="M28.500 10h9l-4.500 5z" fill="#444"/></svg>
      <svg width="22" height="22"><path d="M0 1.500h20M4 2v18M4 8h5M4 18h5" fill="none" stroke="#888" stroke-width="1.500"/><path d="M6.500 6h5v5h-5zM6.500 15.500h5v5h-5z" fill="#f9b04c" stroke="#e08613"/><path d="M12 1h5v10h4l-6.500 9L8.500 11H12z" fill="#5384b8" stroke="#2e5a89"/></svg>
      <svg width="22" height="22"><path d="M0 1.500h20M4 2v18M4 8h5M4 18h5" fill="none" stroke="#888" stroke-width="1.500"/><path d="M6.500 6h5v5h-5zM6.500 15.500h5v5h-5z" fill="#f9b04c" stroke="#e08613"/><path d="M12 20h5V10h4L14.500 0 8.500 10H12z" fill="#5384b8" stroke="#2e5a89"/></svg>
      <svg width="22" height="22"><path d="M1 1.500h17v17H1z" fill="#f3f2f0" stroke="#7c7c7c" stroke-width="1.500"/><rect x="13" y="14" width="8.500" height="7" rx="1.500" fill="#e0404a"/><path d="M14.500 17.500h5.500" stroke="#fff" stroke-width="1.700"/></svg>
    </div>
    <div class="tree">
      <div class="row"><svg class="ex"><use href="#down" y="7" width="9" height="5"/></svg><svg class="cb"><use href="#check"/></svg><svg class="gi"><use href="#grp"/></svg><span data-w="125">Lane Geometry</span></div>
      <div class="row child hot"><svg class="cb"><use href="#check"/></svg><svg class="sy"><circle cx="10" cy="9" r="4.800" fill="#b98c4a" stroke="#555"/></svg><span class="m15" data-w="165"><u>Reference Point [1]</u></span><svg class="me"><use href="#mem"/></svg></div>
      <div class="row child"><svg class="cb"><use href="#check"/></svg><svg class="sy"><circle cx="10" cy="9" r="4.800" fill="#e57150" stroke="#333"/></svg><span class="m15" data-w="108">Waypoint [0]</span><svg class="me"><use href="#mem"/></svg></div>
      <div class="row child"><svg class="cb"><use href="#check"/></svg><svg class="sy"><circle cx="10" cy="9" r="4.800" fill="#b7d04f" stroke="#333"/></svg><span class="m15" data-w="205">Input Polygon Points [0]</span><svg class="me"><use href="#mem"/></svg></div>
      <div class="row child"><svg class="cb"><use href="#check"/></svg><svg class="sy"><rect width="18" height="18" fill="#fee8d6"/></svg><span data-w="146">Input Polygon [0]</span><svg class="me"><use href="#mem"/></svg></div>
      <div class="row child"><svg class="cb"><use href="#check"/></svg><svg class="sy"><rect width="18" height="18" fill="#b4f0ee"/></svg><span data-w="170">Occupied Region [0]</span><svg class="me"><use href="#mem"/></svg></div>
      <div class="row child"><svg class="cb"><use href="#check"/></svg><svg class="sy"><use href="#edge" y="3" width="18" height="12"/></svg><span data-w="125">Lane Edge [40]</span><svg class="me"><use href="#mem"/></svg></div>
      <div class="row child dim"><svg class="cb"><use href="#uncheck"/></svg><svg class="sy"><use href="#arrow" y="5" width="18" height="8"/></svg><span data-w="206">Contact Traffic_Light [0]</span><svg class="me"><use href="#mem"/></svg></div>
      <div class="row child dim"><svg class="cb"><use href="#uncheck"/></svg><svg class="sy"><use href="#arrow" y="5" width="18" height="8"/></svg><span data-w="179">Lane Orientation [20]</span><svg class="me"><use href="#mem"/></svg></div>
      <div class="row child"><svg class="cb"><use href="#check"/></svg><svg class="sy"><use href="#yarrow" y="4" width="18" height="10"/></svg><span data-w="163">Lane Direction [20]</span><svg class="me"><use href="#mem"/></svg></div>
      <div class="row"><svg class="ex"><use href="#right" x="2" y="5" width="5" height="9"/></svg><svg class="cb"><use href="#check"/></svg><svg class="gi"><use href="#grp"/></svg><span data-w="90">Lane Types</span></div>
      <div class="row"><svg class="ex"><use href="#right" x="2" y="5" width="5" height="9"/></svg><svg class="cb"><use href="#check"/></svg><svg class="gi"><use href="#grp"/></svg><span data-w="104">Speed Limits</span></div>
      <div class="row"><svg class="ex"><use href="#right" x="2" y="5" width="5" height="9"/></svg><svg class="cb"><use href="#check"/></svg><svg class="gi"><use href="#grp"/></svg><span data-w="107">Contact Type</span></div>
      <div class="row"><svg class="ex"><use href="#right" x="2" y="5" width="5" height="9"/></svg><svg class="cb"><use href="#check"/></svg><svg class="gi"><use href="#grp"/></svg><span data-w="75">Topology</span></div>
      <div class="row"><svg class="ex"></svg><svg class="cb"><use href="#check"/></svg><svg class="gi"><use href="#grp"/></svg><span data-w="115">Miscellaneous</span></div>
      <div class="row"><svg class="ex"><use href="#right" x="2" y="5" width="5" height="9"/></svg><svg class="cb"><use href="#check"/></svg><svg class="gi"><use href="#grp"/></svg><span data-w="88">Landmarks</span></div>
    </div>
  </aside>
  <svg class="split" width="8" height="567"><path d="M2.500 345v24M5.500 347v24" stroke="#bbb" stroke-dasharray="1 3"/></svg>
  <svg class="map" viewBox="378 243 1513 567">
    <path d="M679 243H927L950.500 789 703 794z" fill="#c8c7ec"/>
    <path d="M703 793.500L950.500 789 951 810H704z" fill="#b3d6b5"/>
    <path d="M703 793.500L950.500 789" stroke="#8fa9b5"/>
    <path d="M378.500 654v23" stroke="#f7b5b5"/>
    <path d="M753 764.500h25l17 16.500v25l-4 4h-51l-4-4v-25z" fill="#d3d3e8" stroke="#8d9bc0"/>
    <path d="M754.500 767.500h22l15.500 15.500v10h-53v-10z" fill="#a32e5f"/>
    <path d="M739 793h53v12l-5 5h-43l-5-5z" fill="#aa8462"/>
    <text x="742.500" y="803.500" class="stop" textLength="46" lengthAdjust="spacingAndGlyphs">STOP</text>
    <path d="M745 807.500h41" stroke="#d9cfc8" stroke-width="1.500"/>
    <g fill="none" stroke="#fb0007" stroke-width="4.700"><path d="M679 243L686 400 700.500 740 703 794 705 812"/><path d="M803 243L810 400 824.500 740 826.500 792 828 812"/><path d="M927 243L934 400 948.500 740 950.500 789 951 812"/></g>
    <path d="M702 797q-2 7-8 14M952 791q3 12 13 20" fill="none" stroke="#000" stroke-width="5"/>
    <path d="M704 809.500h247" stroke="#d43a2a" stroke-width="1"/>
    <path d="M1600 810l291-3v3z" fill="#f00000"/>
    <g fill="#000"><circle cx="703" cy="794" r="5.800"/><circle cx="826.500" cy="791.500" r="5.800"/><circle cx="950.500" cy="789.500" r="5.800"/></g>
    <g fill="#b7d04f" stroke="#2e3322" stroke-width="1.100">
      <circle cx="627" cy="462" r="4.800"/><circle cx="633" cy="541" r="4.800"/><circle cx="656" cy="633" r="4.800"/><circle cx="686" cy="721" r="4.800"/><circle cx="723" cy="535" r="4.800"/><circle cx="772" cy="566" r="4.800"/><circle cx="812" cy="569" r="4.800"/><circle cx="860" cy="539" r="4.800"/><circle cx="846" cy="651" r="4.800"/><circle cx="882" cy="659" r="4.800"/><circle cx="788" cy="687" r="4.800"/><circle cx="747" cy="702" r="4.800"/><circle cx="942" cy="678" r="4.800"/><circle cx="936" cy="471" r="4.800"/><circle cx="1012" cy="430" r="4.800"/><circle cx="1033" cy="501" r="4.800"/><circle cx="1039" cy="543" r="4.800"/><circle cx="1064" cy="653" r="4.800"/><circle cx="1018" cy="716" r="4.800"/><circle cx="1069" cy="715" r="4.800"/>
      <circle cx="879" cy="581" r="4.800" fill="#f89a1c"/>
    </g>
  </svg>
</main>
<script src="fit.js"></script>
</body>
</html>
```

FILE: styles.css
```css
* { box-sizing: border-box; }
body { margin: 0; width: 1891px; height: 810px; overflow: hidden; background: #efebe7; font: 18px/23px "Open Sans", "Noto Sans", sans-serif; color: #000; display: flex; flex-direction: column; }
.defs { position: absolute; }
svg { flex: none; display: block; }
[data-w] { display: block; flex: none; white-space: nowrap; }
.fit { display: inline-block; transform-origin: 0 50%; white-space: pre; }
.grow { flex: 1; }
.m7 { margin-left: 7px; } .m8 { margin-left: 8px; } .m9 { margin-left: 9px; } .m10 { margin-left: 10px; } .m11 { margin-left: 11px; } .m12 { margin-left: 12px; } .m13 { margin-left: 13px; } .m17 { margin-left: 17px; } .m18 { margin-left: 18px; } .m21 { margin-left: 21px; } .m41 { margin-left: 41px; }

.panel { height: 43px; flex: none; display: flex; align-items: center; padding-left: 8px; background: #3c3b37; color: #dfdbd2; }
.ptext { text-shadow: 1px 1px 0 #111; }
.clock { margin-right: -1px; }
.title { height: 32px; flex: none; display: flex; align-items: center; padding-left: 13px; border-top: 1px solid #504f4b; background: linear-gradient(#474641, #3c3b37); color: #dfdbd2; }
.ttext { margin: -1px 0 0 14px; font-weight: 600; }
.menu { height: 26px; flex: none; display: flex; gap: 16px; padding: 1px 0 0 11px; border-bottom: 1px solid #d6d2cd; background: #efebe7; }
u { text-decoration: underline; text-decoration-thickness: 2px; text-underline-offset: 3px; text-decoration-skip-ink: none; }

.bar { height: 47px; flex: none; display: flex; align-items: center; padding-left: 5px; background: linear-gradient(#f8f5f1, #efebe7); border-bottom: 1px solid #b4afaa; }
.bar.last { height: 46px; }
.bar b { width: 41px; height: 39px; flex: none; display: flex; align-items: center; padding-left: 5.5px; }
.bar b svg { width: 30px; height: 30px; overflow: visible; }
.bar symbol, .bar use, symbol { overflow: visible; }
.bar b.dd { width: 56px; }
.bar b.dd::after { content: ""; margin-left: 7px; border: 5px solid transparent; border-top: 5px solid #444; border-bottom: 0; }
.bar b.off { opacity: .26; filter: saturate(.6); }
.bar b.on { background: #dedad6; border: 1px solid #b3afab; border-radius: 3px; padding-left: 4px; }
.grip { width: 18px; height: 18px; flex: none; padding: 0 4px 0 8px; background: radial-gradient(circle at 1px 1px, #cac6c1 .7px, transparent 1px) 0 0 / 4px 4px content-box; background-clip: content-box; }
.grip.first { width: 9.5px; padding: 0 3.5px 0 0; }
.sep { width: 8px; height: 29px; flex: none; background: linear-gradient(#c9c5c0, #c9c5c0) 4px 0 / 1px 100% no-repeat; }

.g18 { font: 18px "Open Sans", sans-serif; fill: #333; }
.g12b { font: bold 12px "Open Sans", sans-serif; }
.g11b { font: bold 11px "Open Sans", sans-serif; }
.ital { font: italic bold 22px "Liberation Serif", serif; }
.serifT { font: bold 21px "Liberation Serif", serif; fill: #3c4247; }
.serifQ { font: 25px "Liberation Serif", serif; fill: #fff; }
.eps { font: bold 25px "Liberation Serif", serif; fill: #6b3a78; }
.stop { font: bold 27px "Liberation Sans", sans-serif; fill: #dcd5de; }

.work { flex: 1; min-height: 0; display: flex; padding-top: 2px; }
.dock { width: 370px; flex: none; display: flex; flex-direction: column; }
.dhead { height: 22px; flex: none; display: flex; align-items: center; padding: 0 1px 0 4px; }
.dtools { height: 39px; flex: none; display: flex; align-items: center; gap: 11px; padding: 0 0 0 9px; }
.dtools svg { overflow: visible; }
.tree { flex: 1; min-height: 0; overflow: hidden; background: #fff; border: 1px solid #b0aca8; border-bottom: 0; }
.row { height: 23px; display: flex; align-items: center; padding-left: 8px; }
.ex { width: 9px; height: 20px; margin-right: 11px; }
.cb { width: 17px; height: 17px; }
.gi { width: 18px; height: 20px; margin: 0 7px; }
.child { padding: 0 7px 0 53px; font-weight: bold; }
.sy { width: 18px; height: 18px; margin: 0 7px 0 6px; }
.m15 { margin-left: 1px; }
.me { width: 20px; height: 20px; margin-left: auto; }
.hot { background: #308cc6; color: #fff; }
.dim { color: #7f7f7f; font-style: italic; }
.map { flex: 1; height: 567px; background: #fff; box-shadow: -1px -1px 0 #b0aca8; }
```

FILE: fit.js
```js
// Condenses each label so that it takes the width given in data-w.
document.querySelectorAll('[data-w]').forEach(function (el) {
  var inner = document.createElement('span');
  inner.className = 'fit';
  while (el.firstChild) inner.appendChild(el.firstChild);
  el.appendChild(inner);
  var want = Number(el.dataset.w);
  el.style.width = want + 'px';
  inner.style.transform = 'scaleX(' + want / inner.offsetWidth + ')';
});
```
